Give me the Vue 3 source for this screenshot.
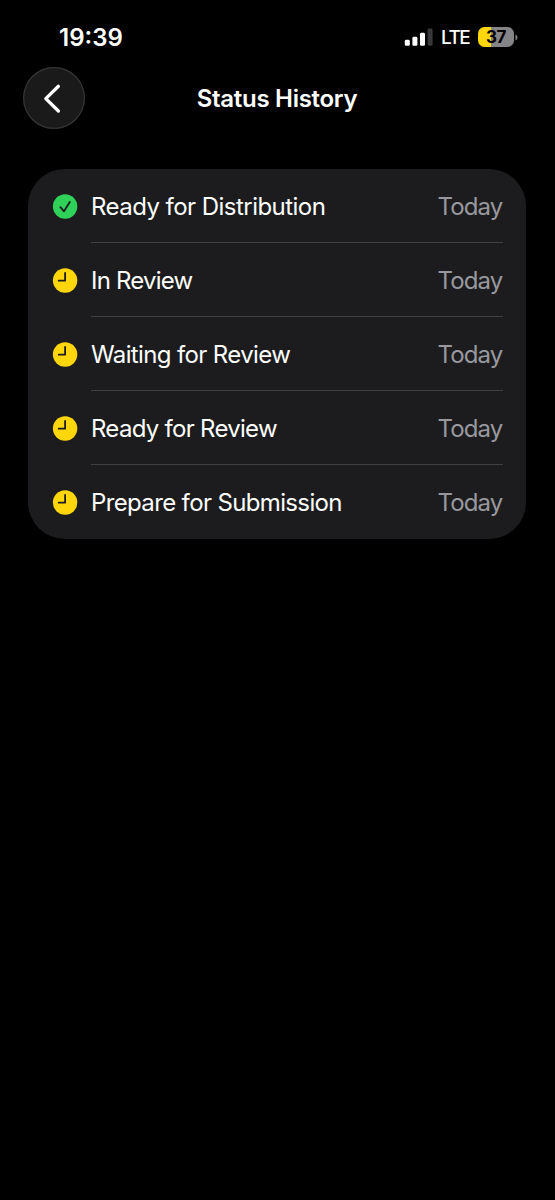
<script setup>
const rows = [
  { label: 'Ready for Distribution', when: 'Today', done: true, key: 'distribution' },
  { label: 'In Review', when: 'Today', done: false, key: 'in-review' },
  { label: 'Waiting for Review', when: 'Today', done: false, key: 'waiting' },
  { label: 'Ready for Review', when: 'Today', done: false, key: 'ready' },
  { label: 'Prepare for Submission', when: 'Today', done: false, key: 'prepare' },
]
</script>

<template>
  <main class="screen">
    <div class="status-bar">
      <span class="time">19:39</span>
      <div class="indicators">
        <svg class="signal" width="29" height="18" viewBox="0 0 29 18">
          <rect x="0.8" y="11.8" width="5" height="6" rx="1.4" fill="#fff" />
          <rect x="8.4" y="8.8" width="5" height="9" rx="1.4" fill="#fff" />
          <rect x="16" y="4.8" width="5" height="13" rx="1.4" fill="#fff" />
          <rect x="23.6" y="0.5" width="5" height="17.3" rx="1.4" fill="#38383a" />
        </svg>
        <span class="network">LTE</span>
        <div class="battery">
          <div class="cell"><span class="percent">37</span></div>
          <svg width="3" height="7" viewBox="0 0 3 7"><path d="M.5.5Q2.5 1.4 2.5 3.5T.5 6.5Z" fill="#858587" /></svg>
        </div>
      </div>
    </div>

    <header class="nav">
      <button class="back" aria-label="Back">
        <svg width="62" height="62" viewBox="0 0 62 62" fill="none">
          <path d="M35.4 19.3 22.8 31.6 35.4 44" stroke="#fff" stroke-width="3.3" stroke-linecap="round" stroke-linejoin="round" />
        </svg>
      </button>
      <h1>Status History</h1>
    </header>

    <ul class="card">
      <li v-for="row in rows" :key="row.key" class="row">
        <svg class="icon" width="26" height="25" viewBox="0 0 26 25" fill="none">
          <circle cx="13.1" cy="12.5" r="12.2" :fill="row.done ? '#30d158' : '#ffd60a'" />
          <path v-if="row.done" d="M8.4 13.1 12 17.3 17.8 8" stroke="#1c1c1e" stroke-width="1.8" stroke-linecap="round" stroke-linejoin="round" />
          <path v-else d="M13.1 4.9V12.7H6.7" stroke="#1c1c1e" stroke-width="1.8" stroke-linecap="round" stroke-linejoin="round" />
        </svg>
        <div class="content">
          <span class="label" :class="row.key">{{ row.label }}</span>
          <span class="when">{{ row.when }}</span>
        </div>
      </li>
    </ul>
  </main>
</template>

<style>
body {
  background: #000;
}
</style>

<style scoped>
.screen {
  box-sizing: border-box;
  height: 1200px;
  background: #000;
  color: #fff;
  font-family: Inter, "Liberation Sans", sans-serif;
}
.status-bar {
  display: flex;
  justify-content: space-between;
  align-items: center;
  height: 67px;
  padding: 7px 37px 0 59px;
  box-sizing: border-box;
}
.time {
  padding-top: 2px;
  font-size: 24px;
  font-weight: 600;
  line-height: 30px;
  letter-spacing: 0;
}
.indicators {
  display: flex;
  align-items: center;
}
.network {
  width: 37px;
  margin-left: 8px;
  padding-top: 1px;
  font-size: 19px;
  font-weight: 500;
  line-height: 24px;
  letter-spacing: -1.5px;
}
.battery {
  display: flex;
  align-items: center;
  gap: 1px;
}
.cell {
  width: 36px;
  height: 20px;
  border-radius: 6.5px;
  background: linear-gradient(90deg, #ffd60a 37%, #858587 37%);
  text-align: center;
}
.percent {
  display: block;
  color: #000;
  font-size: 17px;
  font-weight: 700;
  line-height: 21px;
  letter-spacing: -0.4px;
}
.nav {
  display: grid;
  grid-template-columns: 62px 1fr 62px;
  align-items: center;
  padding: 0 23px;
}
.back {
  box-sizing: border-box;
  width: 62px;
  height: 62px;
  padding: 0;
  border: 0;
  border-radius: 50%;
  background: #1a1a1a;
  box-shadow: inset 0 0 0 1.2px #353535;
}
.back svg {
  display: block;
}
h1 {
  margin: 0;
  padding: 2px 1px 0 0;
  font-size: 24px;
  font-weight: 600;
  line-height: 30px;
  text-align: center;
  letter-spacing: -0.28px;
}
.card {
  margin: 40px 29px 0 28px;
  padding: 0;
  height: 370px;
  border-radius: 37px;
  background: #1c1c1e;
  list-style: none;
}
.row {
  display: flex;
  align-items: center;
  height: 74px;
  padding: 0 23px 0 24px;
}
.icon {
  flex: none;
  margin-right: 13px;
}
.content {
  flex: 1;
  box-sizing: border-box;
  display: flex;
  justify-content: space-between;
  align-items: center;
  height: 74px;
  border-bottom: 1px solid #404043;
  padding-top: 2px;
}
.row:last-child .content {
  border-bottom-color: transparent;
}
.label,
.when {
  font-size: 24px;
  line-height: 30px;
}
.distribution {
  letter-spacing: -0.54px;
}
.in-review {
  letter-spacing: -0.8px;
}
.waiting {
  letter-spacing: -0.63px;
}
.ready {
  letter-spacing: -0.72px;
}
.prepare {
  letter-spacing: -0.64px;
}
.when {
  margin-right: 0.5px;
  color: #98989f;
  letter-spacing: -0.85px;
}
</style>
